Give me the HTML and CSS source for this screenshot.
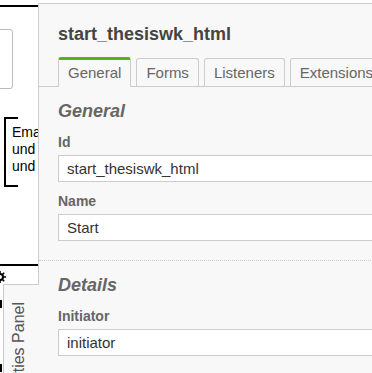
FILE: index.html
```html
<!DOCTYPE html>
<html lang="en">
<head>
  <meta charset="UTF-8" />
  <title>Properties Panel</title>
  <link rel="stylesheet" href="styles.css">
</head>
<body>
  <div class="modeler">
    <div class="canvas">
      <div class="pool-line pool-top"></div>
      <div class="task"></div>
      <div class="annotation"></div>
      <div class="annotation-text">
        <p>Email</p>
        <p>und</p>
        <p>und</p>
      </div>
      <div class="pool-line pool-bottom"></div>
      <svg class="wrench" width="12" height="12" viewBox="0 0 12 12">
        <circle cx="6" cy="6" r="3" fill="none" stroke="#000" stroke-width="2"/>
        <path d="M6 0v3M6 9v3M0 6h3M9 6h3M1.8 1.8l2 2M8.2 8.2l2 2M10.2 1.8l-2 2M1.8 10.2l2-2" stroke="#000" stroke-width="1.6"/>
      </svg>
      <div class="mark mark-a"></div>
      <div class="mark mark-b"></div>
    </div>

    <div class="panel">
      <div class="panel-title">start_thesiswk_html</div>

      <div class="tabs">
        <div class="tab active">General</div>
        <div class="tab">Forms</div>
        <div class="tab">Listeners</div>
        <div class="tab">Extensions</div>
      </div>

      <div class="group">
        <h3>General</h3>
        <div class="field">
          <label for="id">Id</label>
          <input type="text" id="id" value="start_thesiswk_html">
        </div>
        <div class="field">
          <label for="name">Name</label>
          <input type="text" id="name" value="Start">
        </div>
      </div>

      <div class="group">
        <h3>Details</h3>
        <div class="field">
          <label for="initiator">Initiator</label>
          <input type="text" id="initiator" value="initiator">
        </div>
      </div>
    </div>

    <div class="panel-toggle"><span>Properties Panel</span></div>
  </div>
</body>
</html>
```

FILE: styles.css
```css
:root {
  --panel-bg: #f8f8f8;
  --line: #cccccc;
  --text-muted: #666;
  --green: #52b415;
}

body {
  margin: 0;
  font-family: 'Liberation Sans', Arial, sans-serif;
  background: #fff;
  overflow: hidden;
}

.modeler {
  position: relative;
  display: flex;
  height: 100vh;
}

/* diagram canvas, mostly hidden behind the panel */
.canvas {
  position: relative;
  flex: none;
  width: 38px;
  overflow: hidden;
}

.pool-line {
  position: absolute;
  left: 0;
  width: 60px;
  height: 2px;
  background: #000;
}

.pool-top { top: 5px; }
.pool-bottom { top: 264px; }

.task {
  position: absolute;
  left: -80px;
  top: 29px;
  width: 91px;
  height: 58px;
  border: 1px solid #bbb;
  border-radius: 3px;
}

.annotation {
  position: absolute;
  left: 4px;
  top: 117px;
  width: 12px;
  height: 66px;
  border: 2px solid #000;
  border-right: none;
}

.annotation-text {
  position: absolute;
  left: 12px;
  top: 124px;
  font-size: 14px;
  line-height: 17px;
  color: #000;
  white-space: nowrap;
}

.annotation-text p {
  margin: 0;
}

.wrench {
  position: absolute;
  left: -6px;
  top: 271px;
}

.mark {
  position: absolute;
  left: 0;
  width: 2px;
  height: 8px;
  background: #000;
}

.mark-a { top: 300px; }
.mark-b { top: 364px; }

/* properties panel */
.panel {
  flex: none;
  width: 420px;
  margin-top: 3px;
  background: var(--panel-bg);
  border-top: 1px solid var(--line);
  border-left: 1px solid var(--line);
}

.panel-title {
  padding: 20px 19px 0;
  font-size: 18px;
  line-height: 21px;
  font-weight: bold;
  color: #444;
}

.tabs {
  display: flex;
  align-items: flex-end;
  gap: 5px;
  margin-top: 12px;
  padding: 0 19px;
  border-bottom: 1px solid var(--line);
}

.tab {
  padding: 5px 9px;
  font-size: 15px;
  line-height: 17px;
  color: var(--text-muted);
  white-space: nowrap;
  background: var(--panel-bg);
  border: 1px solid var(--line);
  border-bottom: none;
  border-radius: 3px 3px 0 0;
}

.tab.active {
  border-top: 3px solid var(--green);
  padding-top: 4px;
  padding-bottom: 6px;
  margin-bottom: -1px;
}

.group {
  padding: 14px 19px 19px;
  border-bottom: 1px dotted var(--line);
}

.group h3 {
  margin: 0 0 12px;
  font-size: 18px;
  line-height: 21px;
  font-style: italic;
  font-weight: bold;
  color: var(--text-muted);
}

.field + .field {
  margin-top: 11px;
}

.field label {
  display: block;
  margin-bottom: 4px;
  font-size: 14px;
  line-height: 17px;
  font-weight: bold;
  color: var(--text-muted);
}

.field input {
  display: block;
  width: 100%;
  box-sizing: border-box;
  margin: 0;
  padding: 4px 8px;
  font-family: inherit;
  font-size: 15px;
  line-height: 17px;
  color: #333;
  background: #fff;
  border: 1px solid var(--line);
  border-radius: 0;
  outline: none;
}

/* collapsed panel toggle on the canvas edge */
.panel-toggle {
  position: absolute;
  left: 3px;
  top: 284px;
  width: 36px;
  height: 140px;
  box-sizing: border-box;
  padding: 17px 0 0 6px;
  background: var(--panel-bg);
  border: 1px solid var(--line);
  border-right: none;
}

.panel-toggle span {
  display: block;
  writing-mode: vertical-rl;
  transform: rotate(180deg);
  font-size: 16px;
  line-height: 18px;
  color: #555;
  white-space: nowrap;
}
```
